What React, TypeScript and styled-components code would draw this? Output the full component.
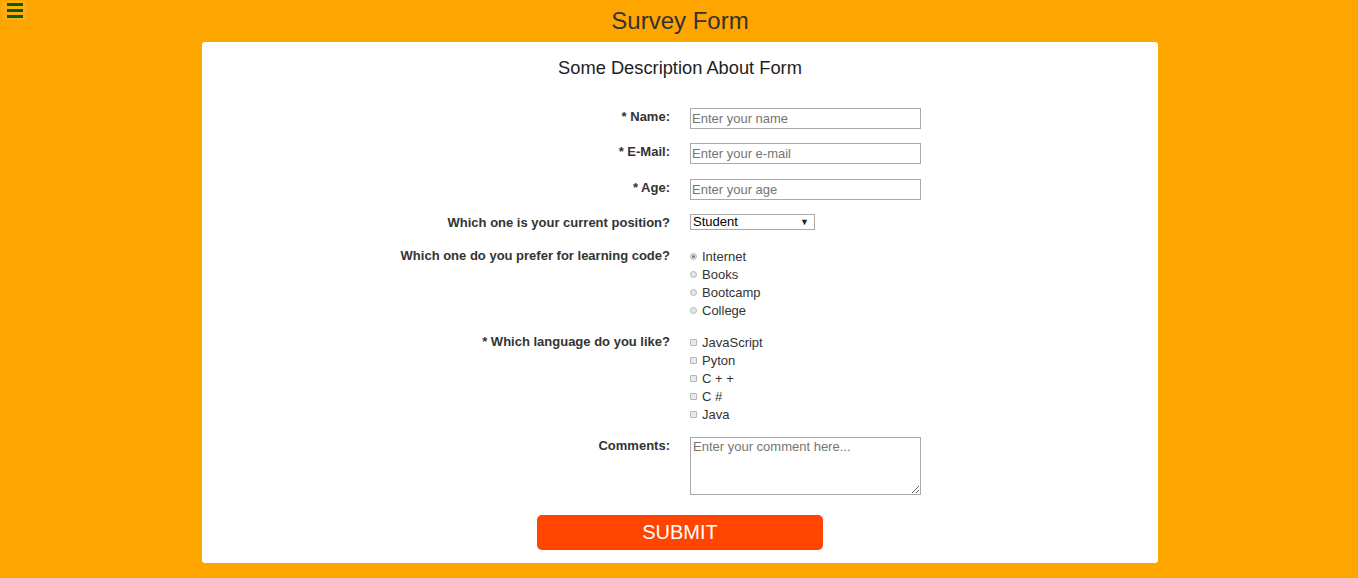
import React from "react";
import styled, { createGlobalStyle } from "styled-components";

const GlobalStyle = createGlobalStyle`
  html, body { margin: 0; padding: 0; background: #ffa500; }
  body { font-family: "Liberation Sans", Arial, sans-serif; color: #333; }
  * { box-sizing: border-box; }
`;

const Page = styled.div`
  position: relative;
  min-height: 578px;
  background: #ffa500;
  padding: 0 0 15px 2px;
`;

const MenuButton = styled.div`
  position: absolute;
  left: 2px;
  top: 1px;
  width: 25px;
  height: 19px;
  background: rgba(255, 255, 255, 0.09);
  display: flex;
  flex-direction: column;
  align-items: center;
  justify-content: center;
  gap: 3px;
`;

const Bar = styled.span`
  display: block;
  width: 16px;
  height: 3px;
  background: #006400;
`;

const Header = styled.header`
  height: 42px;
  display: flex;
  align-items: center;
  justify-content: center;
`;

const Title = styled.h1`
  margin: 0;
  font-size: 24px;
  font-weight: normal;
  color: #333;
  line-height: 28px;
`;

const Card = styled.main`
  width: 956px;
  margin: 0 auto;
  background: #fff;
  border-radius: 3px;
  padding: 15px 0 13px;
`;

const Description = styled.h2`
  margin: 0 0 30px;
  text-align: center;
  font-size: 18.3px;
  line-height: 21px;
  font-weight: normal;
  color: #222;
`;

const Row = styled.div<{ $gap?: number }>`
  display: grid;
  grid-template-columns: 1fr 1fr;
  column-gap: 20px;
  align-items: start;
  margin-bottom: ${(p) => (p.$gap ?? 14)}px;
`;

const Label = styled.label`
  text-align: right;
  font-size: 13px;
  font-weight: bold;
  line-height: 17px;
  color: #333;
`;

const Control = styled.div`
  display: flex;
  flex-direction: column;
  align-items: flex-start;
`;

const TextInput = styled.input`
  display: block;
  width: 231px;
  height: 21px;
  border: 1px solid #a9a9a9;
  padding: 0 1px;
  font-family: "Liberation Sans", Arial, sans-serif;
  font-size: 13px;
  color: #222;
  outline: none;
  &::placeholder { color: #757575; }
`;

const SelectWrap = styled.div`
  position: relative;
  width: 125px;
  height: 16px;
`;

const Select = styled.select`
  display: block;
  appearance: none;
  width: 125px;
  height: 16px;
  border: 1px solid #a9a9a9;
  border-radius: 0;
  background: #fff;
  padding: 0 0 0 2px;
  font-family: "Liberation Sans", Arial, sans-serif;
  font-size: 13px;
  line-height: 14px;
  color: #000;
  outline: none;
`;

const Arrow = styled.span`
  position: absolute;
  right: 6px;
  top: 1px;
  font-size: 9px;
  line-height: 14px;
  color: #222;
  pointer-events: none;
`;

const Option = styled.label`
  display: flex;
  align-items: center;
  height: 18px;
  font-size: 13px;
  color: #333;
  gap: 5px;
`;

const Radio = styled.input.attrs({ type: "radio" })`
  appearance: none;
  margin: 0;
  width: 7px;
  height: 7px;
  border-radius: 50%;
  border: 1px solid #b5b5b5;
  background: #e6e6e6;
  position: relative;
  &:checked::after {
    content: "";
    position: absolute;
    left: 1px;
    top: 1px;
    width: 3px;
    height: 3px;
    border-radius: 50%;
    background: #777;
  }
`;

const Checkbox = styled.input.attrs({ type: "checkbox" })`
  appearance: none;
  margin: 0;
  width: 7px;
  height: 7px;
  border: 1px solid #b5b5b5;
  border-radius: 1px;
  background: #e9e9e9;
`;

const TextArea = styled.textarea`
  display: block;
  width: 231px;
  height: 58px;
  border: 1px solid #a9a9a9;
  padding: 1px 2px;
  font-family: "Liberation Sans", Arial, sans-serif;
  font-size: 13px;
  color: #222;
  outline: none;
  &::placeholder { color: #757575; }
`;

const SubmitRow = styled.div`
  display: flex;
  justify-content: center;
  padding-top: 6px;
`;

const Submit = styled.button`
  display: block;
  width: 286px;
  height: 35px;
  border: none;
  border-radius: 5px;
  background: #ff4500;
  color: #fff;
  font-family: "Liberation Sans", Arial, sans-serif;
  font-size: 20px;
  cursor: pointer;
`;

const learning = ["Internet", "Books", "Bootcamp", "College"];
const languages = ["JavaScript", "Pyton", "C + +", "C #", "Java"];

export default function App() {
  return (
    <>
      <GlobalStyle />
      <Page>
        <MenuButton>
          <Bar />
          <Bar />
          <Bar />
        </MenuButton>
        <Header>
          <Title>Survey Form</Title>
        </Header>
        <Card>
          <Description>Some Description About Form</Description>
          <form onSubmit={(e) => e.preventDefault()}>
            <Row>
              <Label htmlFor="name">* Name:</Label>
              <Control>
                <TextInput id="name" placeholder="Enter your name" />
              </Control>
            </Row>
            <Row $gap={15}>
              <Label htmlFor="email">* E-Mail:</Label>
              <Control>
                <TextInput id="email" placeholder="Enter your e-mail" />
              </Control>
            </Row>
            <Row $gap={14}>
              <Label htmlFor="age">* Age:</Label>
              <Control>
                <TextInput id="age" placeholder="Enter your age" />
              </Control>
            </Row>
            <Row $gap={16}>
              <Label htmlFor="position">Which one is your current position?</Label>
              <Control>
                <SelectWrap>
                  <Select id="position" defaultValue="Student">
                    <option>Student</option>
                    <option>Full Time Job</option>
                    <option>Part Time Job</option>
                    <option>Other</option>
                  </Select>
                  <Arrow>▼</Arrow>
                </SelectWrap>
              </Control>
            </Row>
            <Row>
              <Label>Which one do you prefer for learning code?</Label>
              <Control>
                {learning.map((l, i) => (
                  <Option key={l}>
                    <Radio name="learning" defaultChecked={i === 0} />
                    {l}
                  </Option>
                ))}
              </Control>
            </Row>
            <Row>
              <Label>* Which language do you like?</Label>
              <Control>
                {languages.map((l) => (
                  <Option key={l}>
                    <Checkbox />
                    {l}
                  </Option>
                ))}
              </Control>
            </Row>
            <Row>
              <Label htmlFor="comments">Comments:</Label>
              <Control>
                <TextArea id="comments" placeholder="Enter your comment here..." />
              </Control>
            </Row>
            <SubmitRow>
              <Submit type="submit">SUBMIT</Submit>
            </SubmitRow>
          </form>
        </Card>
      </Page>
    </>
  );
}
